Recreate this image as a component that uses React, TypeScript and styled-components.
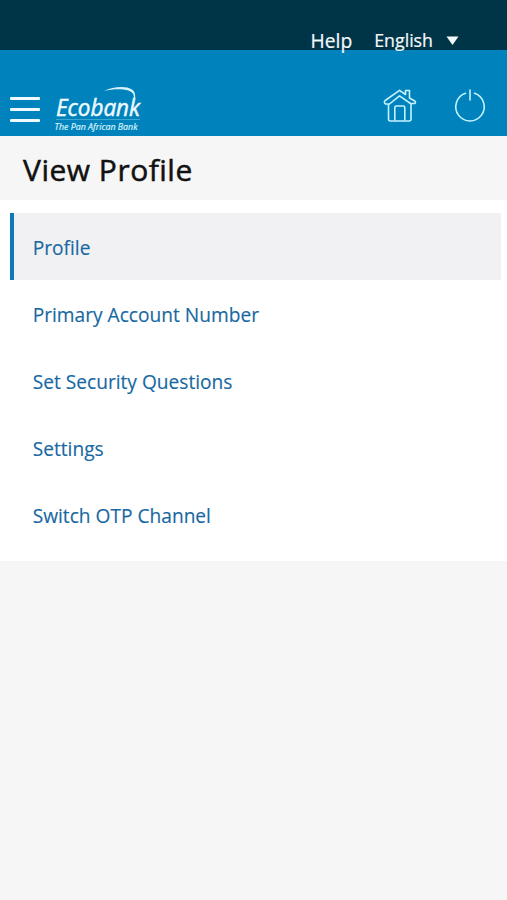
import React from "react";
import styled, { createGlobalStyle } from "styled-components";

const GlobalStyle = createGlobalStyle`
  * { box-sizing: border-box; }
  body { margin: 0; background: #f6f6f6; font-family: "Open Sans", sans-serif; }
`;

const Screen = styled.div`
  min-height: 900px;
  display: flex;
  flex-direction: column;
  background: #f6f6f6;
`;

const UtilityBar = styled.div`
  z-index: 1;
  height: 50px;
  padding: 27px 48px 0 0;
  display: flex;
  justify-content: flex-end;
  align-items: flex-start;
  background: #003548;
  color: #f4fafc;
  line-height: 26px;
  -webkit-text-stroke: 0.2px;
`;

const HelpLink = styled.a`
  padding-top: 1px;
  font-size: 19.3px;
  margin-right: 22px;
`;

const Language = styled.div`
  display: flex;
  align-items: center;
  gap: 13px;
  font-size: 17.8px;
`;

const Header = styled.header`
  height: 86px;
  padding: 0 20px 0 10px;
  display: flex;
  align-items: flex-start;
  background: #0083bd;
`;

const MenuButton = styled.button`
  width: 30px;
  height: 28px;
  margin: 47px 14px 0 0;
  padding: 0;
  border: 0;
  background: none;
  display: flex;
  flex-direction: column;
  gap: 8px;
`;

const MenuLine = styled.span`
  height: 3px;
  flex: none;
  border-radius: 1px;
  background: #eefaff;
`;

const Logo = styled.svg`
  margin-top: 34px;
  flex: none;
`;

const Actions = styled.div`
  margin: 36px 0 0 auto;
  display: flex;
  gap: 34px;
`;

const TitleBar = styled.div`
  height: 64px;
  padding-left: 23px;
  display: flex;
  align-items: center;
`;

const Title = styled.h1`
  margin: 4px 0 0;
  font-size: 30px;
  font-weight: 400;
  letter-spacing: 0.5px;
  line-height: 40px;
  color: #111;
  -webkit-text-stroke: 0.5px #111;
`;

const Menu = styled.nav`
  height: 361px;
  padding: 13px 6px 0 10px;
  background: #fff;
`;

const MenuItem = styled.a<{ $active?: boolean }>`
  height: 67px;
  display: flex;
  align-items: center;
  padding: 2px 0 0 18.7px;
  border-left: 4px solid ${(p) => (p.$active ? "#0c7ab4" : "transparent")};
  background: ${(p) => (p.$active ? "#f1f1f3" : "transparent")};
  color: #1868a2;
  font-size: 19.15px;
  -webkit-text-stroke: 0.15px #1868a2;
`;

const items = ["Profile", "Primary Account Number", "Set Security Questions", "Settings", "Switch OTP Channel"];

export default function App() {
  return (
    <Screen>
      <GlobalStyle />
      <UtilityBar>
        <HelpLink>Help</HelpLink>
        <Language>
          English
          <svg width="13" height="9" viewBox="0 0 13 9"><path d="M.5.5h12L6.5 9z" fill="#f4fafc" /></svg>
        </Language>
      </UtilityBar>
      <Header>
        <MenuButton aria-label="Menu"><MenuLine /><MenuLine /><MenuLine /></MenuButton>
        <Logo width="90" height="50" viewBox="0 0 90 50" overflow="visible">
          <text x="2" y="31.5" textLength="84" lengthAdjust="spacingAndGlyphs" fill="#eefaff" stroke="#eefaff" strokeWidth=".5" fontFamily="Open Sans, sans-serif" fontStyle="italic" fontWeight="400" fontSize="24">Ecobank</text>
          <path d="M50 7C59 2.5 72 1.5 78 5.5c4.5 3 3.5 9 1.5 14 .5-6 1.5-10-3.5-12.3-6-2.7-17-2.4-26-.2z" fill="#d8f2fc" />
          <path d="M2 35.5h84" stroke="#3aa8d0" strokeWidth="1" />
          <text x="0.5" y="46" textLength="83" lengthAdjust="spacingAndGlyphs" fill="#d8f2fc" stroke="#d8f2fc" strokeWidth=".2" fontFamily="Open Sans, sans-serif" fontStyle="italic" fontWeight="400" fontSize="8.8">The Pan African Bank</text>
        </Logo>
        <Actions>
          <svg width="36" height="38" viewBox="0 0 36 38" fill="none" stroke="#c5f2fc" strokeWidth="1.6" strokeLinejoin="round">
            <path d="M5.5 18v15q0 2 2 2H26q2 0 2-2V18M2 17.5c-1-1-.8-2 .2-3L16.5 4.3l6 4.2V4.5h4V12l5.3 3c1 1 .8 2 0 2.5h-4.3L16.5 9.8 6.5 18h-4z" />
            <path d="M11.8 34.5V21.5q0-1.5 1.5-1.5h7q1.5 0 1.5 1.5v13" />
          </svg>
          <svg width="34" height="38" viewBox="0 0 34 38" fill="none" stroke="#c5f2fc" strokeWidth="1.6" strokeLinecap="round">
            <path d="M12.5 7.3a14.2 14.2 0 1 0 9 0M17 4v10" />
          </svg>
        </Actions>
      </Header>
      <TitleBar><Title>View Profile</Title></TitleBar>
      <Menu>
        {items.map((label, i) => <MenuItem key={label} $active={i === 0}>{label}</MenuItem>)}
      </Menu>
    </Screen>
  );
}
